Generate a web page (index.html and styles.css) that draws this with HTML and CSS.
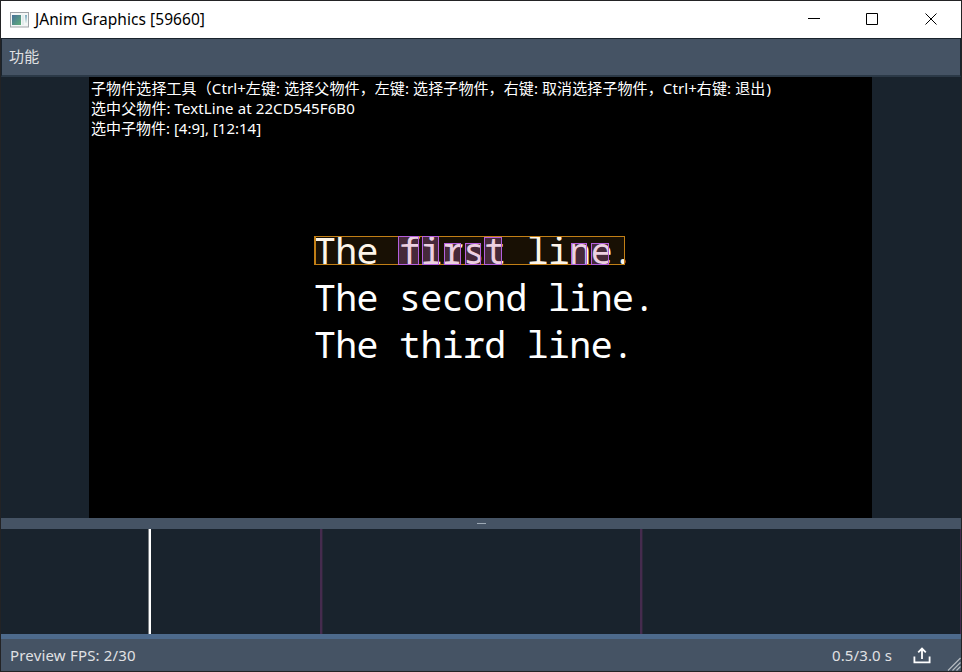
FILE: index.html
```html
<!DOCTYPE html>
<html lang="zh-CN">
<head>
<meta charset="utf-8">
<title>JAnim Graphics [59660]</title>
<link rel="stylesheet" href="styles.css">
</head>
<body>
<div class="window">
  <header class="titlebar">
    <svg class="app-icon" width="19" height="16" viewBox="0 0 19 16">
      <defs><linearGradient id="g" x1="0" y1="0" x2="1" y2="1"><stop offset="0" stop-color="#48709a"/><stop offset="1" stop-color="#5fae78"/></linearGradient>
      <linearGradient id="h" x1="0" y1="0" x2="0" y2="1"><stop offset="0" stop-color="#7dabc0"/><stop offset="1" stop-color="#e8f3ee"/></linearGradient></defs>
      <rect x=".5" y=".5" width="18" height="14.5" fill="#f4f6f6" stroke="#a0a4a8"/>
      <rect x="2" y="3" width="9" height="10" fill="url(#g)"/>
      <rect x="12" y="3" width="2" height="10" fill="#e2ecec"/>
      <rect x="15" y="3" width="2" height="8" fill="url(#h)"/>
    </svg>
    <span class="title">JAnim Graphics [59660]</span>
    <svg class="controls" width="130" height="14" viewBox="0 0 130 14" fill="none" stroke="#000">
      <path d="M0 6.500h12M58.500 1.500h11v11h-11zM117.500 1.500l11 11M128.500 1.500l-11 11"/>
    </svg>
  </header>
  <nav class="menubar"><span>功能</span></nav>
  <main class="viewport">
    <section class="canvas">
      <div class="hint">
        <p>子物件选择工具（Ctrl+左键: 选择父物件，左键: 选择子物件，右键: 取消选择子物件，Ctrl+右键: 退出<span class="paren">)</span></p>
        <p>选中父物件: TextLine at 22CD545F6B0</p>
        <p class="plain">选中子物件: [4:9], [12:14]</p>
      </div>
      <div class="scene">
        <div class="line">The first line.</div>
        <div class="line">The second line.</div>
        <div class="line">The third line.</div>
        <div class="parent-box"></div>
        <i class="box b1"></i><i class="box b2"></i><i class="box b3"></i><i class="box b4"></i><i class="box b5"></i><i class="box b6"></i><i class="box b7"></i>
      </div>
    </section>
  </main>
  <div class="splitter"><span></span></div>
  <section class="timeline">
    <i class="playhead"></i><i class="mark m1"></i><i class="mark m2"></i><i class="mark m3"></i>
  </section>
  <footer class="status">
    <span class="fps">Preview FPS: 2/30</span>
    <span class="time">0.5/3.0 s</span>
    <svg class="export" width="18" height="17" viewBox="0 0 18 17" fill="none" stroke="#fff" stroke-width="1.800"><path d="M1.400 9.500v5.800h15.200V9.500M9 12V2M5.200 5.400L9 1.600l3.800 3.800"/></svg>
    <svg class="grip" width="14" height="14" viewBox="0 0 14 14" stroke="#b4bac0" stroke-width="1.200"><path d="M1 13.500L13.500 1M5.500 13.500L13.500 5.500M9.500 13.500L13.500 9.500"/></svg>
  </footer>
</div>
</body>
</html>
```
FILE: styles.css
```css
* { box-sizing: border-box; }
body { margin: 0; background: #19232d; }
.window {
  width: 962px; height: 672px; border: 1px solid #232325;
  display: flex; flex-direction: column; overflow: hidden;
  font: 15px/20px "Noto Sans", "Noto Sans CJK SC", sans-serif; color: #e0e1e3;
}
.titlebar { height: 37px; flex: none; background: #fff; color: #000; display: flex; align-items: center; padding: 0 23px 0 9px; }
.app-icon { margin-right: 6px; }
.title { flex: 1; font-size: 15.500px; letter-spacing: .05px; padding-bottom: 2px; }
.controls { margin-bottom: 2px; }
.menubar { height: 39px; flex: none; background: #455364; border: 1px solid #19232d; border-width: 1px 1px 2px; border-bottom-color: #2b3947; padding: 7px; letter-spacing: .3px; }
.viewport { height: 441px; flex: none; padding: 0 89px 0 88px; }
.canvas { height: 441px; background: #000; color: #fff; overflow: hidden; padding: 1px 0 0 2px; }
.hint p { margin: 0; height: 20px; white-space: pre; letter-spacing: .1px; }
.hint .plain { letter-spacing: 0; }
.paren { margin-left: 1px; }
.scene { position: relative; margin: 89px 0 0 223px; }
.line { height: 47px; font: 36.500px/47px "Noto Sans Mono", "DejaVu Sans Mono", monospace; letter-spacing: -.62px; white-space: pre; }
.parent-box { position: absolute; left: 0; top: 9px; width: 311px; height: 29px; border: 1px solid #c27f16; border-left-width: 2px; background: rgba(240,160,40,.1); }
.box { position: absolute; height: 22px; top: 16px; width: 18px; border: 1px solid #b55fdd; background: rgba(195,112,208,.27); }
.b1 { left: 84px; top: 9px; width: 21px; height: 29px; }
.b2 { left: 108px; top: 9px; width: 17px; height: 29px; }
.b3 { left: 130px; width: 17px; }
.b4 { left: 151px; width: 16px; }
.b5 { left: 170px; top: 10px; height: 28px; }
.b6 { left: 257px; width: 16px; }
.b7 { left: 277px; }
.splitter { height: 11px; flex: none; background: #455364; display: flex; align-items: center; justify-content: center; }
.splitter span { width: 9px; height: 1px; background: #9da9b5; }
.timeline { height: 105px; flex: none; position: relative; background: #19232d; }
.timeline i { position: absolute; top: 0; height: 105px; }
.playhead { left: 147px; width: 3px; background: #fff; border-left: 1px solid #7c8186; }
.mark { width: 3px; background: #452b4e; border-right: 1px solid #2b2638; }
.m1 { left: 319px; }
.m2 { left: 639px; }
.m3 { left: 959px; }
.status { height: 37px; flex: none; background: #455364; border-top: 5px solid #4d6a8c; display: flex; align-items: center; padding-left: 9px; }
.fps { flex: 1; letter-spacing: .18px; }
.time { letter-spacing: .1px; }
.export { margin: 0 16px 0 21px; }
.grip { align-self: flex-end; }
```
